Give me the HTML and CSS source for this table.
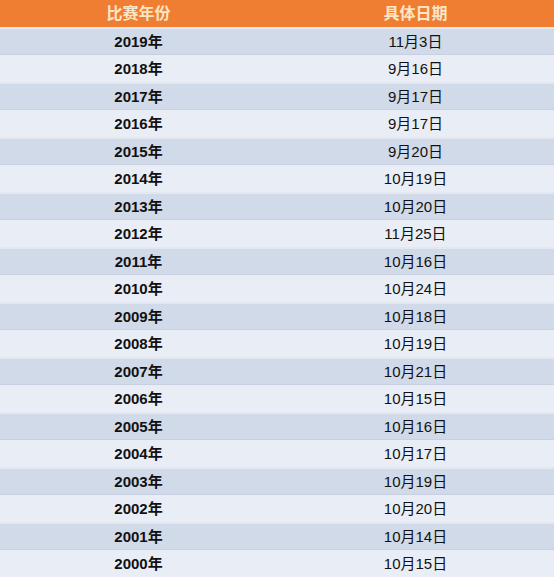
FILE: index.html
```html
<!DOCTYPE html>
<html lang="zh">
<head>
<meta charset="utf-8">
<link rel="stylesheet" href="styles.css">
</head>
<body>
<div class="table">
  <div class="row head"><div class="cell">比赛年份</div><div class="cell">具体日期</div></div>
  <div class="row"><div class="cell year">2019年</div><div class="cell">11月3日</div></div>
  <div class="row"><div class="cell year">2018年</div><div class="cell">9月16日</div></div>
  <div class="row"><div class="cell year">2017年</div><div class="cell">9月17日</div></div>
  <div class="row"><div class="cell year">2016年</div><div class="cell">9月17日</div></div>
  <div class="row"><div class="cell year">2015年</div><div class="cell">9月20日</div></div>
  <div class="row"><div class="cell year">2014年</div><div class="cell">10月19日</div></div>
  <div class="row"><div class="cell year">2013年</div><div class="cell">10月20日</div></div>
  <div class="row"><div class="cell year">2012年</div><div class="cell">11月25日</div></div>
  <div class="row"><div class="cell year">2011年</div><div class="cell">10月16日</div></div>
  <div class="row"><div class="cell year">2010年</div><div class="cell">10月24日</div></div>
  <div class="row"><div class="cell year">2009年</div><div class="cell">10月18日</div></div>
  <div class="row"><div class="cell year">2008年</div><div class="cell">10月19日</div></div>
  <div class="row"><div class="cell year">2007年</div><div class="cell">10月21日</div></div>
  <div class="row"><div class="cell year">2006年</div><div class="cell">10月15日</div></div>
  <div class="row"><div class="cell year">2005年</div><div class="cell">10月16日</div></div>
  <div class="row"><div class="cell year">2004年</div><div class="cell">10月17日</div></div>
  <div class="row"><div class="cell year">2003年</div><div class="cell">10月19日</div></div>
  <div class="row"><div class="cell year">2002年</div><div class="cell">10月20日</div></div>
  <div class="row"><div class="cell year">2001年</div><div class="cell">10月14日</div></div>
  <div class="row"><div class="cell year">2000年</div><div class="cell">10月15日</div></div>
</div>
</body>
</html>
```
FILE: styles.css
```css
html, body {
  margin: 0;
  padding: 0;
  background: #eceff7;
}
.table {
  width: 554px;
  display: flex;
  flex-direction: column;
  font-family: "Liberation Sans", "Noto Sans CJK SC", sans-serif;
  font-size: 15px;
  color: #111;
}
.row {
  display: grid;
  grid-template-columns: 1fr 1fr;
  height: 27.5px;
  align-items: center;
  background: #e9edf6;
}
.row:nth-child(even) {
  background: #d1dae9;
  box-shadow: inset 0 -1px 0 #c9d0e2, inset 0 2px 0 #e4e6f0;
}
.row.head {
  height: 27px;
  background: #ef7d32;
  box-shadow: none;
  color: #fbe6c6;
  font-weight: bold;
  font-size: 16px;
}
.cell {
  text-align: center;
  line-height: 1;
  padding-top: 1px;
}
.year {
  font-weight: bold;
}
```
